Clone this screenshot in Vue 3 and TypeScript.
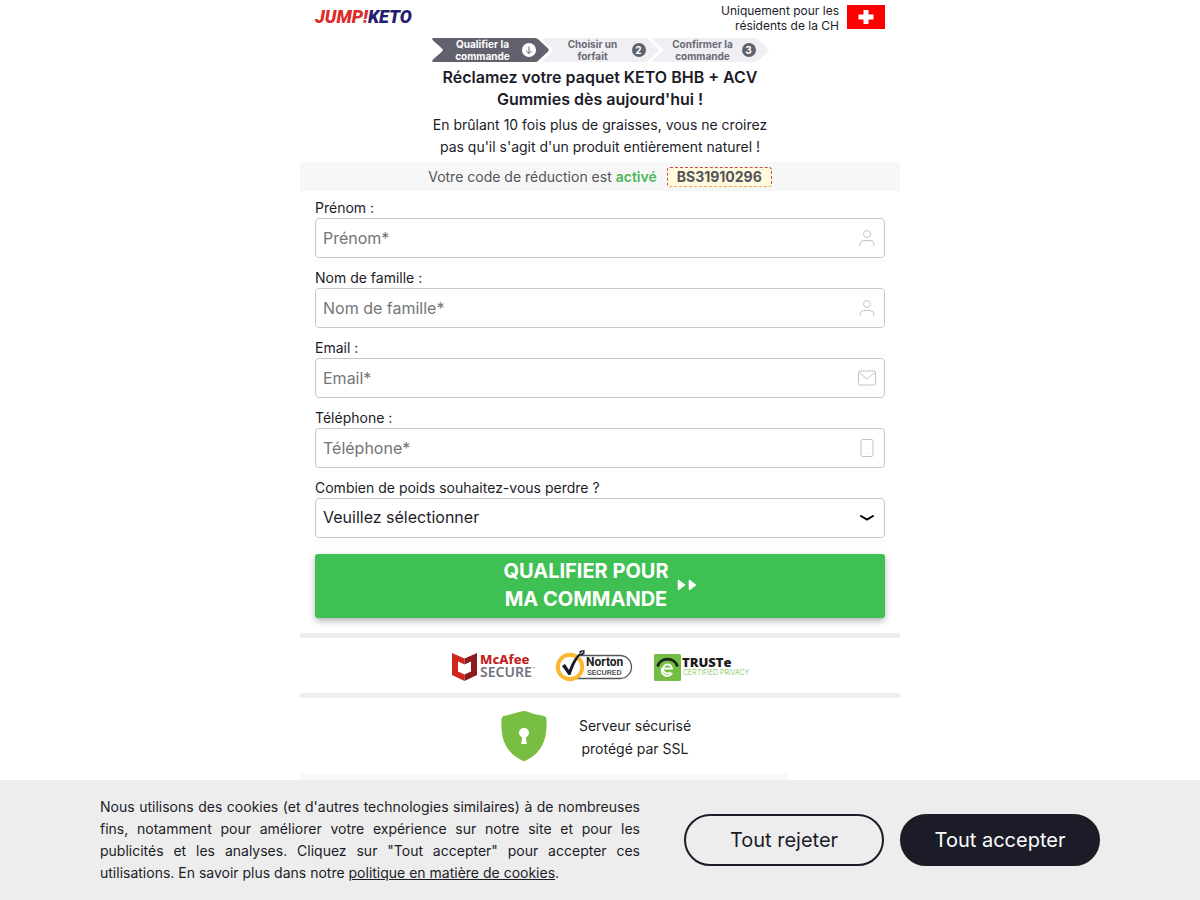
<script setup lang="ts">
import { reactive } from 'vue'

interface Step {
  lines: [string, string]
  badge: string
  active: boolean
}

interface Field {
  id: string
  label: string
  placeholder: string
  type: string
  icon: 'user' | 'mail' | 'phone'
}

const steps: Step[] = [
  { lines: ['Qualifier la', 'commande'], badge: '', active: true },
  { lines: ['Choisir un', 'forfait'], badge: '2', active: false },
  { lines: ['Confirmer la', 'commande'], badge: '3', active: false },
]

const fields: Field[] = [
  { id: 'firstname', label: 'Prénom :', placeholder: 'Prénom*', type: 'text', icon: 'user' },
  { id: 'lastname', label: 'Nom de famille :', placeholder: 'Nom de famille*', type: 'text', icon: 'user' },
  { id: 'email', label: 'Email :', placeholder: 'Email*', type: 'email', icon: 'mail' },
  { id: 'phone', label: 'Téléphone :', placeholder: 'Téléphone*', type: 'tel', icon: 'phone' },
]

const form = reactive<Record<string, string>>({
  firstname: '',
  lastname: '',
  email: '',
  phone: '',
  goal: '',
})
</script>

<template>
  <div class="page">
    <main class="sheet">
      <header class="top">
        <div class="brand"><span class="brand-red">JUMP!</span><span class="brand-blue">KETO</span></div>
        <div class="region">
          <p>Uniquement pour les<br />résidents de la CH</p>
          <svg class="flag" viewBox="0 0 38 24" role="img" aria-label="Suisse">
            <rect width="38" height="24" fill="#fe0000" />
            <path d="M16.500 5h5v4.500h5v5h-5V19h-5v-4.500h-5v-5h5z" fill="#fff" />
          </svg>
        </div>
      </header>

      <ol class="steps">
        <li v-for="(step, i) in steps" :key="i" class="step" :class="{ active: step.active }">
          <svg class="arrow" viewBox="0 0 117 24" aria-hidden="true">
            <path d="M1.500 0H103q2 0 3.500 1.500L116 10.500q1.500 1.500 0 3L106.500 22.500Q105 24 103 24H1.500Q-.5 23.500.5 22L10 13.500q1.500-1.500 0-3L.5 2Q-.5.500 1.500 0z" />
          </svg>
          <span class="step-text">{{ step.lines[0] }}<br />{{ step.lines[1] }}</span>
          <span class="badge">
            <svg v-if="step.active" viewBox="0 0 14 14" aria-hidden="true">
              <path d="M7 3.500v7M4.200 7.800L7 10.600l2.800-2.800" fill="none" stroke="#62626e" stroke-width="1" />
            </svg>
            <template v-else>{{ step.badge }}</template>
          </span>
        </li>
      </ol>

      <h1>Réclamez votre paquet KETO BHB + ACV<br />Gummies dès aujourd'hui !</h1>
      <p class="lead">En brûlant 10 fois plus de graisses, vous ne croirez<br />pas qu'il s'agit d'un produit entièrement naturel !</p>

      <div class="promo">
        <span>Votre code de réduction est <b>activé</b></span>
        <strong class="code">BS31910296</strong>
      </div>

      <form @submit.prevent>
        <div v-for="field in fields" :key="field.id" class="field">
          <label :for="field.id">{{ field.label }}</label>
          <div class="control">
            <input :id="field.id" v-model="form[field.id]" :type="field.type" :placeholder="field.placeholder" />
            <svg class="icon" viewBox="0 0 20 20" aria-hidden="true">
              <g v-if="field.icon === 'user'">
                <circle cx="10" cy="6" r="3.500" />
                <path d="M3 18v-1.500a4 4 0 0 1 4-4h6a4 4 0 0 1 4 4V18" />
              </g>
              <g v-else-if="field.icon === 'mail'">
                <rect x="1.500" y="3" width="17" height="14" rx="1.500" />
                <path d="M2 4.500l8 6.500 8-6.500" />
              </g>
              <g v-else>
                <rect x="4" y="1.500" width="12" height="17" rx="1.500" />
                <path d="M10 15v1" />
              </g>
            </svg>
          </div>
        </div>

        <div class="field">
          <label for="goal">Combien de poids souhaitez-vous perdre ?</label>
          <div class="control">
            <select id="goal" v-model="form.goal">
              <option value="">Veuillez sélectionner</option>
            </select>
            <svg class="icon chevron" viewBox="0 0 20 20" aria-hidden="true">
              <path d="M4 8l6 3.500L16 8" />
            </svg>
          </div>
        </div>

        <button class="submit" type="submit">
          <span>QUALIFIER POUR<br />MA COMMANDE</span>
          <svg viewBox="0 0 20 12" aria-hidden="true">
            <path d="M1.500 1.500v9L7.500 6zM12.500 1.500v9L18.500 6z" fill="#fff" stroke="#fff" stroke-width="1.500" stroke-linejoin="round" />
          </svg>
        </button>
      </form>

      <div class="seals">
        <svg class="mcafee" viewBox="0 0 86 32" role="img" aria-label="McAfee Secure">
          <path d="M1 2l12.500 5.500v6L7 10.500v10l6.500 3V30L1 24z" fill="#d0271d" />
          <path d="M26 2L13.500 7.500v6L20 10.500v10l-6.500 3V30L26 24z" fill="#8c1b1f" />
          <text x="29" y="13" class="mc-name">McAfee</text>
          <text x="29" y="26" class="mc-sub">SECURE</text>
          <text x="81" y="20" class="tm">™</text>
        </svg>
        <svg class="norton" viewBox="0 0 80 36" role="img" aria-label="Norton Secured">
          <path d="M24 6.500h41a11.500 11.500 0 0 1 0 23H20" fill="#fff" stroke="#55565a" stroke-width="1.300" />
          <circle cx="15" cy="18" r="12.200" fill="#fff" stroke="#fbb832" stroke-width="4" />
          <path d="M7 17l3-2 4 6C17 13 20 8 25 4l1 1C21 11 18 18 15.500 26h-2z" fill="#151a26" />
          <path d="M24.500 3.500l3-1.800M26 6l3.500-2.500M28 2.500l1.500-1" stroke="#151a26" stroke-width="1.700" />
          <text x="31" y="17" class="nt-name">Norton</text>
          <text x="32" y="26" class="nt-sub">SECURED</text>
        </svg>
        <svg class="truste" viewBox="0 0 100 32" role="img" aria-label="TRUSTe Certified Privacy">
          <rect x="1" y="3" width="27" height="27" rx="1.500" fill="#74bf43" />
          <path d="M4.500 15.500a10.500 10.500 0 0 1 20 0" fill="none" stroke="#16241a" stroke-width="2.800" />
          <path d="M10 17.500h9a4.500 4.500 0 1 0-1.600 3.800M9.200 17a5.500 5.500 0 0 0 10 4.800" fill="none" stroke="#fff" stroke-width="1.800" />
          <text x="29" y="16" class="tr-name">TRUSTe</text>
          <text x="30" y="24" class="tr-sub">CERTIFIED PRIVACY</text>
        </svg>
      </div>

      <div class="ssl">
        <svg viewBox="0 0 46 52" aria-hidden="true">
          <path d="M20 1.500q3-1.200 6 0 7.500 3.500 16 4.300 3.300.4 3.500 3.700C46.500 28 42 41.500 26 50q-3 1.800-6 0C4 41.500-.5 28 .5 9.500.700 6.200 4 5.800 4 5.800 12.500 5 20 1.500z" fill="#77be43" />
          <path d="M20.200 33l1-5.500a5 5 0 1 1 3.600 0l1 6q0 .5-.6.500h-4.400q-.6 0-.6-.5z" fill="#fff" />
        </svg>
        <p>Serveur sécurisé<br />protégé par SSL</p>
      </div>
      <div class="strip"></div>
    </main>

    <aside class="cookies" aria-label="Cookies">
      <div class="cookies-inner">
        <p>
          Nous utilisons des cookies (et d'autres technologies similaires) à de nombreuses fins, notamment pour
          améliorer votre expérience sur notre site et pour les publicités et les analyses. Cliquez sur "Tout accepter"
          pour accepter ces utilisations. En savoir plus dans notre
          <a href="#">politique en matière de cookies</a>.
        </p>
        <div class="choices">
          <button class="reject" type="button">Tout rejeter</button>
          <button class="accept" type="button">Tout accepter</button>
        </div>
      </div>
    </aside>
  </div>
</template>

<style>
body {
  margin: 0;
  background: #fff;
}
</style>

<style scoped>
.page {
  padding-bottom: 120px;
  font-family: Inter, "Liberation Sans", sans-serif;
  font-size: 14px;
  font-weight: 400;
  line-height: 22px;
  color: #1c1c28;
}
.page *,
.page *::before {
  box-sizing: border-box;
}
p,
h1,
ol {
  margin: 0;
  padding: 0;
}
.sheet {
  max-width: 600px;
  margin: 0 auto;
}
.top {
  display: flex;
  justify-content: space-between;
  align-items: flex-start;
  height: 38px;
  padding: 3px 15px 0;
}
.brand {
  padding-top: 2px;
  font: italic 900 18px/24px Roboto, "Liberation Sans", sans-serif;
}
.brand-red {
  color: #dc2b2b;
}
.brand-blue {
  color: #251c70;
}
.region {
  display: flex;
  gap: 8px;
  font-size: 12px;
  line-height: 15px;
  text-align: right;
}
.flag {
  width: 38px;
  height: 24px;
  margin-top: 2px;
}
.steps {
  display: flex;
  justify-content: center;
  padding-right: 7px;
  list-style: none;
}
.step {
  position: relative;
  display: flex;
  align-items: center;
  width: 110px;
  height: 24px;
  padding-left: 12px;
  font-size: 10px;
  font-weight: 700;
  line-height: 12px;
  color: #6a6a74;
}
.arrow {
  position: absolute;
  top: 0;
  left: 0;
  width: 117px;
  height: 24px;
  fill: #f0f0f4;
}
.active .arrow {
  fill: #62626e;
}
.step-text {
  position: relative;
  width: 78px;
  text-align: center;
}
.active {
  color: #fff;
}
.badge {
  position: relative;
  width: 14px;
  height: 14px;
  border-radius: 50%;
  background: #62626e;
  color: #fff;
  line-height: 14px;
  text-align: center;
}
.active .badge {
  background: #fff;
}
.badge svg {
  display: block;
}
h1 {
  padding-top: 4px;
  font-size: 16px;
  font-weight: 600;
  line-height: 22px;
  text-align: center;
}
.lead {
  padding: 4px 0;
  text-align: center;
}
.promo {
  display: flex;
  justify-content: center;
  align-items: center;
  gap: 10px;
  height: 29px;
  background: #f7f7f7;
  color: #53535a;
}
.promo b {
  font-weight: 600;
  color: #4cb85a;
}
.code {
  padding: 0 9px;
  border: 1px dashed;
  border-color: #c0504d #c0504d #e8a860;
  border-radius: 3px;
  background: #fffbdc;
  font-weight: 700;
  line-height: 18px;
}
form {
  padding: 7px 15px 15px;
}
.field {
  padding-bottom: 10px;
}
.field label {
  display: block;
  line-height: 20px;
}
.control {
  position: relative;
}
.control input,
.control select {
  display: block;
  width: 100%;
  height: 40px;
  padding: 0 40px 0 7px;
  border: 1px solid #c8c8cc;
  border-radius: 4px;
  background: #fff;
  font: 400 16px/20px Inter, "Liberation Sans", sans-serif;
  color: #1c1c28;
  appearance: none;
}
.control select {
  padding-bottom: 2px;
}
.control input::placeholder {
  color: #757575;
  opacity: 1;
}
.icon {
  position: absolute;
  top: 10px;
  right: 8px;
  width: 20px;
  height: 20px;
  fill: none;
  stroke: #c4c4c4;
  stroke-width: 1;
  pointer-events: none;
}
.chevron {
  stroke: #000;
  stroke-width: 2;
  stroke-linecap: round;
}
.submit {
  display: flex;
  justify-content: center;
  align-items: center;
  gap: 8px;
  width: 100%;
  height: 64px;
  margin-top: 6px;
  padding: 0 0 2px;
  border: 0;
  border-radius: 3px;
  background: #3fc052;
  box-shadow: 0 3px 6px rgba(0, 0, 0, 0.3);
  font: 700 20px/28px Inter, "Liberation Sans", sans-serif;
  color: #fff;
}
.submit svg {
  width: 20px;
  height: 12px;
}
.seals {
  display: flex;
  justify-content: center;
  align-items: center;
  gap: 18px;
  height: 65px;
  padding: 3px 0 0 3px;
  border: solid #ededed;
  border-width: 5px 0;
}
.mcafee {
  width: 86px;
  height: 32px;
}
.norton {
  width: 80px;
  height: 36px;
}
.truste {
  width: 100px;
  height: 32px;
}
.mc-name {
  font: 800 13px "Noto Sans", sans-serif;
  fill: #c3221d;
}
.mc-sub {
  font: 600 14px "Noto Sans", sans-serif;
  fill: #6f7380;
}
.nt-name {
  font: 700 12px Roboto, sans-serif;
  fill: #222;
}
.nt-sub {
  font: 500 8px Roboto, sans-serif;
  fill: #444;
}
.tr-name {
  font: 800 13px "Open Sans", sans-serif;
  fill: #1c1c1c;
}
.tr-sub {
  font: 300 7px Inter, sans-serif;
  fill: #74bf43;
}
.tm {
  font: 400 5px Inter, sans-serif;
  fill: #888;
}
.ssl {
  display: flex;
  justify-content: center;
  align-items: center;
  gap: 32px;
  height: 76px;
  padding-right: 8px;
  line-height: 23px;
  text-align: center;
}
.ssl svg {
  width: 46px;
  height: 52px;
}
.ssl p {
  padding-top: 2px;
}
.strip {
  width: 488px;
  height: 6px;
  background: #f7f7f7;
}
.cookies {
  position: fixed;
  right: 0;
  bottom: 0;
  left: 0;
  background: #ededed;
}
.cookies-inner {
  display: flex;
  justify-content: space-between;
  align-items: center;
  gap: 44px;
  max-width: 1000px;
  min-height: 120px;
  margin: 0 auto;
}
.cookies p {
  flex: 1;
  text-align: justify;
}
.cookies a {
  color: inherit;
}
.choices {
  display: flex;
  gap: 16px;
}
.choices button {
  width: 200px;
  height: 52px;
  border: 2px solid #1c1c28;
  border-radius: 26px;
  background: transparent;
  font: 400 20px/24px Inter, "Liberation Sans", sans-serif;
  color: #1c1c28;
}
.choices .accept {
  background: #1c1c28;
  color: #fff;
}
</style>
